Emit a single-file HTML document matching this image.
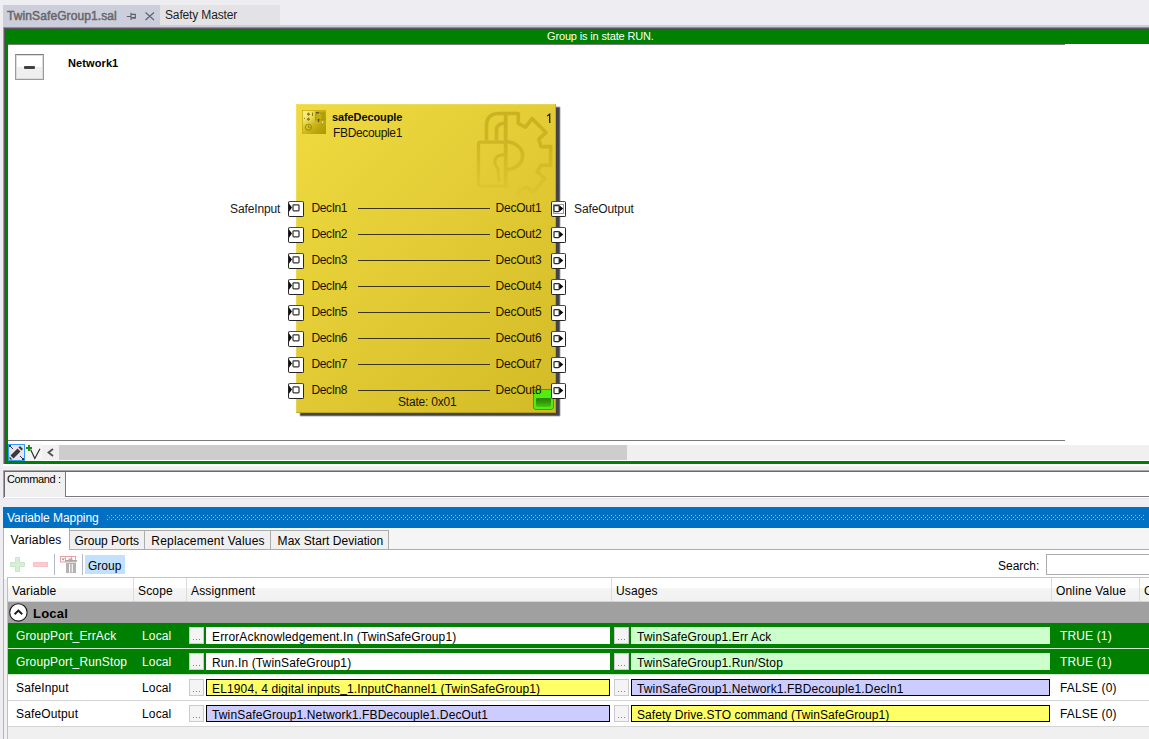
<!DOCTYPE html>
<html>
<head>
<meta charset="utf-8">
<title>TwinSafeGroup1.sal</title>
<style>
html,body{margin:0;padding:0;}
body{width:1149px;height:739px;background:#eeeef2;position:relative;overflow:hidden;font-family:"Liberation Sans",sans-serif;font-size:12px;color:#000;}
.a{position:absolute;}
.t{position:absolute;white-space:nowrap;line-height:14px;}
/* document tabs */
#tab1{left:3px;top:5px;width:157px;height:22px;background:#cccedb;}
#tab2{left:160px;top:5px;width:120px;height:20px;background:#e3e3e6;}
#tabline{left:3px;top:25px;width:1146px;height:2px;background:#cccedb;}
/* editor frame */
#frameTop{left:3px;top:27px;width:1146px;height:1px;background:#8f8f93;}
#frameTop2{left:4px;top:28px;width:1145px;height:1px;background:#5e5462;}
#frameLeft{left:3px;top:27px;width:1px;height:437px;background:#9c9ca3;}
#frameLeft2{left:4px;top:28px;width:1px;height:436px;background:#5e5462;}
#green{left:5px;top:29px;width:1144px;height:435px;background:#008000;}
#canvas{left:8px;top:44px;width:1141px;height:417px;background:#fff;}
#canvasTopLine{left:8px;top:44px;width:1057px;height:1px;background:#7d7d7d;}
#canvasBotLine{left:8px;top:440px;width:1057px;height:1px;background:#7a7a7a;}
/* function block */
#fb{left:296px;top:104px;width:260px;height:309px;background:linear-gradient(135deg,#efdb40 0%,#e3cc35 45%,#d3bb27 100%);box-shadow:4px 3px 1.200px 0 #444448, inset 1px 1px 0 rgba(255,255,255,0.16), inset -1px -1px 0 rgba(70,60,0,0.22);}
.pin{position:absolute;width:14px;height:14px;border:1px solid #262626;border-top-color:#4a4a4a;border-radius:2px;background:#fff;}
.pl{position:absolute;height:1px;left:358px;width:132px;background:#3b3508;}
.fbt{color:#191400;font-size:12px;}
#led{left:533px;top:389px;width:19px;height:19px;border:1px solid #3c9e0b;border-radius:3px;background:#54ec10;}
#collapse{left:15px;top:54px;width:27px;height:24px;border:1px solid #9a9a9a;border-top-color:#7e7e7e;background:#fff;box-shadow:inset 0 0 0 1px #dcdcdc;}
.vt{top:530px;height:19px;background:#f0f0f0;border:1px solid #acacac;border-bottom:none;box-sizing:border-box;}
.bt{width:15px;height:17px;box-sizing:border-box;border:1px solid #cdc8d2;background:#f4f4f4;overflow:hidden;}
.bt span{position:absolute;left:3px;top:11px;width:1px;height:1px;background:#85808c;box-shadow:3px 0 0 #85808c,6px 0 0 #85808c;font-size:0;color:transparent;}
.fld{height:17px;box-sizing:border-box;white-space:nowrap;overflow:visible;font-size:12px;line-height:17px;padding-left:6px;padding-top:2px;color:#000;letter-spacing:0.14px;}
.fld.b{padding-left:5px;padding-top:1px;}
</style>
</head>
<body>
<!-- document tab strip -->
<div class="a" id="tab1"></div>
<div class="a" id="tab2"></div>
<div class="a" id="tabline"></div>
<div class="t" style="left:7px;top:9px;color:#68686c;font-size:12px;letter-spacing:0.1px;-webkit-text-stroke:0.5px #68686c;">TwinSafeGroup1.sal</div>
<svg class="a" style="left:124px;top:9px;" width="34" height="14" viewBox="0 0 34 14">
  <path d="M2.800 7.500 H6.500 M7 3.800 V11 M7.500 5.400 H11.300 V9" stroke="#5e5e64" stroke-width="1.100" fill="none"/><rect x="7.400" y="8" width="4.500" height="1.700" fill="#5e5e64"/>
  <path d="M21.500 3.500 L30 11 M30 3.500 L21.500 11" stroke="#646468" stroke-width="1.2" fill="none"/>
</svg>
<div class="t" style="left:165px;top:8px;color:#1e1e1e;font-size:12px;letter-spacing:-0.15px;">Safety Master</div>

<!-- editor frame -->
<div class="a" id="frameTop"></div>
<div class="a" id="frameLeft"></div>
<div class="a" id="green"></div>
<div class="a" id="frameTop2"></div>
<div class="a" id="frameLeft2"></div>
<div class="a" id="canvas"></div>
<div class="a" id="canvasTopLine"></div>
<div class="a" id="canvasBotLine"></div>
<div class="t" style="left:547px;top:29px;color:#fff;font-size:11px;letter-spacing:-0.15px;">Group is in state RUN.</div>

<!-- function block -->
<div class="a" id="fb"></div>
<svg class="a" style="left:465px;top:105px;" width="95" height="95" viewBox="465 105 95 95">
  <defs>
    <linearGradient id="wf" x1="0" y1="0" x2="0" y2="1"><stop offset="0" stop-color="#fff" stop-opacity="1"/><stop offset="0.4" stop-color="#fff" stop-opacity="0.8"/><stop offset="0.85" stop-color="#fff" stop-opacity="0.2"/><stop offset="1" stop-color="#fff" stop-opacity="0.05"/></linearGradient>
    <mask id="wmk" maskUnits="userSpaceOnUse" x="465" y="105" width="95" height="95"><rect x="465" y="105" width="95" height="95" fill="url(#wf)"/></mask>
    <filter id="wb" x="-5%" y="-5%" width="110%" height="110%"><feGaussianBlur stdDeviation="0.7"/></filter>
  </defs>
  <g mask="url(#wmk)"><g filter="url(#wb)" opacity="0.55" fill="none" stroke="#b39a10" stroke-width="3.600" stroke-linejoin="round" stroke-linecap="butt">
    <path d="M486.500 140.500 V126 Q486.500 113.500 499 113.500 H518.300 V123.500 L525.500 127.200 L532 118.600 L546 132.600 L538.800 139.200 L541 146.600 H550.600 V165.400 H541 L537.200 172 L544.800 178.500 L533.200 192.400 L526.600 187.200 L518.300 190.600 V197"/>
    <path d="M496.500 140.500 V130.500 Q496.500 123.200 505.500 123"/>
    <path d="M505.700 112 V188" stroke-width="3.800"/>
    <path d="M505.500 142.200 H480.500 Q478.500 142.200 478.500 144.200 V184 Q478.500 186 480.500 186 H505.500" stroke-width="3.200"/>
    <path d="M505.500 141.800 A17.200 13.900 0 0 1 505.500 169.600"/>
    <path d="M505.500 154.500 Q494.800 154.800 494.800 161.500 Q494.800 166 498 168 L498.800 182" stroke-width="3"/>
  </g></g>
</svg>
<svg class="a" style="left:302px;top:110px;" width="24" height="24" viewBox="0 0 24 24">
  <defs>
    <linearGradient id="ig" x1="0" y1="0" x2="1" y2="1">
      <stop offset="0" stop-color="#f3e568"/><stop offset="0.35" stop-color="#dfcb33"/><stop offset="0.7" stop-color="#bea80f"/><stop offset="1" stop-color="#ac9800"/>
    </linearGradient>
    <radialGradient id="ih" cx="0.15" cy="0.2" r="0.5"><stop offset="0" stop-color="#fff7a0" stop-opacity="0.7"/><stop offset="1" stop-color="#fff7a0" stop-opacity="0"/></radialGradient>
  </defs>
  <rect x="0" y="0" width="24" height="24" fill="url(#ig)"/>
  <rect x="0" y="0" width="24" height="24" fill="url(#ih)"/>
  <rect x="0" y="0" width="24" height="1" fill="#c4ae18" opacity="0.8"/><rect x="0" y="0" width="1" height="24" fill="#c4ae18" opacity="0.8"/>
  <rect x="13" y="1.500" width="10.500" height="9" fill="#a99500" opacity="0.75"/>
  <g fill="#7d6c00" opacity="0.85">
    <path d="M6.400 2.300 L8.200 4.200 L6.400 6.100 L4.600 4.200 Z"/>
    <path d="M6.400 7.300 L8.200 9.200 L6.400 11.100 L4.600 9.200 Z"/>
    <rect x="2" y="7.800" width="1" height="1"/>
    <rect x="10" y="2.600" width="1" height="3.400"/>
    <rect x="14" y="2" width="3" height="1.500" fill="#5e5200"/>
    <rect x="15.800" y="9" width="1.400" height="3" fill="#4e4400"/>
  </g>
  <path d="M14.500 7 L17 3.800 L19.500 7 M15 9 L17 6.500 L19 9" stroke="#d8c838" stroke-width="1" fill="none" opacity="0.8"/>
  <rect x="20" y="11.600" width="1.200" height="1.200" fill="#fffbe0"/>
  <circle cx="6.400" cy="17.200" r="3.100" fill="none" stroke="#8a7800" stroke-width="0.9" opacity="0.8"/>
  <path d="M6.400 15 V17.400 H8.400" stroke="#8a7800" stroke-width="0.8" fill="none" opacity="0.8"/>
</svg>
<div class="t" style="left:332px;top:110px;font-weight:bold;font-size:11px;color:#0c0c0c;letter-spacing:-0.1px;">safeDecouple</div>
<div class="t fbt" style="left:333px;top:126px;letter-spacing:-0.34px;">FBDecouple1</div>
<svg class="a" style="left:545px;top:112px;" width="8" height="13" viewBox="545 112 8 13"><path d="M547.200 116 L549.700 114.300 V123" stroke="#1c1600" stroke-width="1.250" fill="none"/></svg>
<div class="t fbt" style="left:398px;top:395px;letter-spacing:-0.2px;">State: 0x01</div>
<div class="a" id="led"><div class="a" style="left:2px;top:8px;width:15px;height:9px;border-radius:1px 1px 2px 2px;background:linear-gradient(180deg,#2a8507 0%,#2f9208 35%,#44c80d 100%);"></div></div>
<div class="pin" style="left:288px;top:201px;"><svg class="a" style="left:0;top:0" width="14" height="14" viewBox="0 0 14 14"><path d="M0 1.500 L3 5.600 L0 9.700 Z" fill="#0a0a0a"/><rect x="4" y="2.900" width="6" height="6" rx="0.800" fill="#fff" stroke="#353535" stroke-width="1.250"/></svg></div>
<div class="pin" style="left:551px;top:201px;width:13px;"><svg class="a" style="left:0;top:0" width="14" height="14" viewBox="0 0 14 14"><rect x="1.500" y="2.500" width="10" height="9" fill="none" stroke="#333" stroke-width="1" stroke-dasharray="1 1"/><rect x="2" y="3.500" width="5.200" height="6" rx="0.800" fill="#fff" stroke="#2c2c2c" stroke-width="1.250"/><path d="M7.400 3.200 L11.300 6.500 L7.400 9.800 Z" fill="#0a0a0a"/></svg></div>
<div class="t fbt" style="left:311.600px;top:201px;letter-spacing:-0.42px;">DecIn1</div>
<div class="t fbt" style="left:495.500px;top:201px;letter-spacing:-0.2px;">DecOut1</div>
<div class="pl" style="top:208px;"></div>
<div class="pin" style="left:288px;top:227px;"><svg class="a" style="left:0;top:0" width="14" height="14" viewBox="0 0 14 14"><path d="M0 1.500 L3 5.600 L0 9.700 Z" fill="#0a0a0a"/><rect x="4" y="2.900" width="6" height="6" rx="0.800" fill="#fff" stroke="#353535" stroke-width="1.250"/></svg></div>
<div class="pin" style="left:551px;top:227px;width:13px;"><svg class="a" style="left:0;top:0" width="14" height="14" viewBox="0 0 14 14"><rect x="2" y="3.500" width="5.200" height="6" rx="0.800" fill="#fff" stroke="#2c2c2c" stroke-width="1.250"/><path d="M7.400 3.200 L11.300 6.500 L7.400 9.800 Z" fill="#0a0a0a"/></svg></div>
<div class="t fbt" style="left:311.600px;top:227px;letter-spacing:-0.42px;">DecIn2</div>
<div class="t fbt" style="left:495.500px;top:227px;letter-spacing:-0.2px;">DecOut2</div>
<div class="pl" style="top:234px;"></div>
<div class="pin" style="left:288px;top:253px;"><svg class="a" style="left:0;top:0" width="14" height="14" viewBox="0 0 14 14"><path d="M0 1.500 L3 5.600 L0 9.700 Z" fill="#0a0a0a"/><rect x="4" y="2.900" width="6" height="6" rx="0.800" fill="#fff" stroke="#353535" stroke-width="1.250"/></svg></div>
<div class="pin" style="left:551px;top:253px;width:13px;"><svg class="a" style="left:0;top:0" width="14" height="14" viewBox="0 0 14 14"><rect x="2" y="3.500" width="5.200" height="6" rx="0.800" fill="#fff" stroke="#2c2c2c" stroke-width="1.250"/><path d="M7.400 3.200 L11.300 6.500 L7.400 9.800 Z" fill="#0a0a0a"/></svg></div>
<div class="t fbt" style="left:311.600px;top:253px;letter-spacing:-0.42px;">DecIn3</div>
<div class="t fbt" style="left:495.500px;top:253px;letter-spacing:-0.2px;">DecOut3</div>
<div class="pl" style="top:260px;"></div>
<div class="pin" style="left:288px;top:279px;"><svg class="a" style="left:0;top:0" width="14" height="14" viewBox="0 0 14 14"><path d="M0 1.500 L3 5.600 L0 9.700 Z" fill="#0a0a0a"/><rect x="4" y="2.900" width="6" height="6" rx="0.800" fill="#fff" stroke="#353535" stroke-width="1.250"/></svg></div>
<div class="pin" style="left:551px;top:279px;width:13px;"><svg class="a" style="left:0;top:0" width="14" height="14" viewBox="0 0 14 14"><rect x="2" y="3.500" width="5.200" height="6" rx="0.800" fill="#fff" stroke="#2c2c2c" stroke-width="1.250"/><path d="M7.400 3.200 L11.300 6.500 L7.400 9.800 Z" fill="#0a0a0a"/></svg></div>
<div class="t fbt" style="left:311.600px;top:279px;letter-spacing:-0.42px;">DecIn4</div>
<div class="t fbt" style="left:495.500px;top:279px;letter-spacing:-0.2px;">DecOut4</div>
<div class="pl" style="top:286px;"></div>
<div class="pin" style="left:288px;top:305px;"><svg class="a" style="left:0;top:0" width="14" height="14" viewBox="0 0 14 14"><path d="M0 1.500 L3 5.600 L0 9.700 Z" fill="#0a0a0a"/><rect x="4" y="2.900" width="6" height="6" rx="0.800" fill="#fff" stroke="#353535" stroke-width="1.250"/></svg></div>
<div class="pin" style="left:551px;top:305px;width:13px;"><svg class="a" style="left:0;top:0" width="14" height="14" viewBox="0 0 14 14"><rect x="2" y="3.500" width="5.200" height="6" rx="0.800" fill="#fff" stroke="#2c2c2c" stroke-width="1.250"/><path d="M7.400 3.200 L11.300 6.500 L7.400 9.800 Z" fill="#0a0a0a"/></svg></div>
<div class="t fbt" style="left:311.600px;top:305px;letter-spacing:-0.42px;">DecIn5</div>
<div class="t fbt" style="left:495.500px;top:305px;letter-spacing:-0.2px;">DecOut5</div>
<div class="pl" style="top:312px;"></div>
<div class="pin" style="left:288px;top:331px;"><svg class="a" style="left:0;top:0" width="14" height="14" viewBox="0 0 14 14"><path d="M0 1.500 L3 5.600 L0 9.700 Z" fill="#0a0a0a"/><rect x="4" y="2.900" width="6" height="6" rx="0.800" fill="#fff" stroke="#353535" stroke-width="1.250"/></svg></div>
<div class="pin" style="left:551px;top:331px;width:13px;"><svg class="a" style="left:0;top:0" width="14" height="14" viewBox="0 0 14 14"><rect x="2" y="3.500" width="5.200" height="6" rx="0.800" fill="#fff" stroke="#2c2c2c" stroke-width="1.250"/><path d="M7.400 3.200 L11.300 6.500 L7.400 9.800 Z" fill="#0a0a0a"/></svg></div>
<div class="t fbt" style="left:311.600px;top:331px;letter-spacing:-0.42px;">DecIn6</div>
<div class="t fbt" style="left:495.500px;top:331px;letter-spacing:-0.2px;">DecOut6</div>
<div class="pl" style="top:338px;"></div>
<div class="pin" style="left:288px;top:357px;"><svg class="a" style="left:0;top:0" width="14" height="14" viewBox="0 0 14 14"><path d="M0 1.500 L3 5.600 L0 9.700 Z" fill="#0a0a0a"/><rect x="4" y="2.900" width="6" height="6" rx="0.800" fill="#fff" stroke="#353535" stroke-width="1.250"/></svg></div>
<div class="pin" style="left:551px;top:357px;width:13px;"><svg class="a" style="left:0;top:0" width="14" height="14" viewBox="0 0 14 14"><rect x="2" y="3.500" width="5.200" height="6" rx="0.800" fill="#fff" stroke="#2c2c2c" stroke-width="1.250"/><path d="M7.400 3.200 L11.300 6.500 L7.400 9.800 Z" fill="#0a0a0a"/></svg></div>
<div class="t fbt" style="left:311.600px;top:357px;letter-spacing:-0.42px;">DecIn7</div>
<div class="t fbt" style="left:495.500px;top:357px;letter-spacing:-0.2px;">DecOut7</div>
<div class="pl" style="top:364px;"></div>
<div class="pin" style="left:288px;top:383px;"><svg class="a" style="left:0;top:0" width="14" height="14" viewBox="0 0 14 14"><path d="M0 1.500 L3 5.600 L0 9.700 Z" fill="#0a0a0a"/><rect x="4" y="2.900" width="6" height="6" rx="0.800" fill="#fff" stroke="#353535" stroke-width="1.250"/></svg></div>
<div class="pin" style="left:551px;top:383px;width:13px;"><svg class="a" style="left:0;top:0" width="14" height="14" viewBox="0 0 14 14"><rect x="2" y="3.500" width="5.200" height="6" rx="0.800" fill="#fff" stroke="#2c2c2c" stroke-width="1.250"/><path d="M7.400 3.200 L11.300 6.500 L7.400 9.800 Z" fill="#0a0a0a"/></svg></div>
<div class="t fbt" style="left:311.600px;top:383px;letter-spacing:-0.42px;">DecIn8</div>
<div class="t fbt" style="left:495.500px;top:383px;letter-spacing:-0.2px;">DecOut8</div>
<div class="pl" style="top:390px;"></div>
<div class="t" style="left:230px;top:202px;color:#1a1a1a;letter-spacing:-0.12px;">SafeInput</div>
<div class="t" style="left:574px;top:202px;color:#1a1a1a;letter-spacing:-0.1px;">SafeOutput</div>


<!-- network header -->
<div class="a" id="collapse"><div class="a" style="left:1px;top:12px;width:25px;height:11px;background:#efefef;"></div><div class="a" style="left:8px;top:11px;width:11px;height:3px;background:#404040;border-radius:1px;"></div></div>
<div class="t" style="left:68px;top:56px;font-weight:bold;font-size:11px;color:#000;letter-spacing:0.1px;">Network1</div>

<!-- canvas bottom tool strip -->
<div class="a" style="left:8px;top:444px;width:17px;height:17px;background:#e6e6ec;border:1px solid #3399ff;box-sizing:border-box;"></div>
<svg class="a" style="left:8px;top:444px;" width="17" height="17" viewBox="0 0 17 17">
  <path d="M2 2 L5 5 M12 12 L15 15" stroke="#333" stroke-width="1" fill="none"/>
  <path d="M2.5 11.5 L9.5 4.5 L12.5 7.5 L5.5 14.5 Z" fill="#3a3a3a"/>
  <path d="M10.5 3.5 L12 2 L15 5 L13.5 6.5 Z" fill="#3a3a3a"/>
  <path d="M1.5 12.5 L4.5 15.5 L1.5 15.5 Z" fill="#3a3a3a"/>
  <rect x="1" y="1" width="2" height="2" fill="#333"/><rect x="14" y="14" width="2" height="2" fill="#333"/>
</svg>
<div class="a" style="left:25px;top:444px;width:17px;height:17px;background:#f5f5f5;"></div>
<svg class="a" style="left:25px;top:444px;" width="17" height="17" viewBox="0 0 17 17">
  <path d="M1 4 H7 M4 1 V7" stroke="#1e8a1e" stroke-width="1.900" fill="none"/>
  <path d="M5.600 5.500 L9.800 14.500 L15 4.800" stroke="#2a2a2a" stroke-width="1.150" fill="none"/>
</svg>
<div class="a" style="left:42px;top:445px;width:1107px;height:15px;background:#f0f0f0;"></div>
<svg class="a" style="left:42px;top:444px;" width="17" height="17" viewBox="0 0 17 17">
  <path d="M11 5 L6.5 8.5 L11 12" stroke="#505050" stroke-width="1.8" fill="none"/>
</svg>
<div class="a" style="left:59px;top:445px;width:568px;height:15px;background:#cdcdcd;"></div>

<!-- splitter + command -->
<div class="a" style="left:3px;top:464px;width:1146px;height:2px;background:#ffffff;"></div>
<div class="a" style="left:3px;top:466px;width:1146px;height:4px;background:#f0f0f0;"></div>
<div class="a" style="left:3px;top:470px;width:1146px;height:1px;background:#a8a8a8;"></div>
<div class="a" style="left:4px;top:471px;width:1145px;height:1px;background:#6a6a6a;"></div>
<div class="a" style="left:3px;top:471px;width:1px;height:27px;background:#a0a0a0;"></div>
<div class="a" style="left:4px;top:472px;width:1px;height:25px;background:#6a6a6a;"></div>
<div class="a" style="left:5px;top:472px;width:1144px;height:25px;background:#f0f0f0;"></div>
<div class="a" style="left:4px;top:497px;width:1145px;height:1px;background:#fff;"></div>
<div class="a" style="left:3px;top:498px;width:1146px;height:1px;background:#e4e4ee;"></div>
<div class="a" style="left:65px;top:472px;width:1084px;height:25px;background:#fff;border-left:1px solid #7a7a7a;border-bottom:1px solid #7a7a7a;box-sizing:border-box;"></div>
<div class="t" style="left:7px;top:472px;font-size:11px;color:#000;letter-spacing:-0.36px;">Command :</div>

<!-- variable mapping -->
<div class="a" style="left:3px;top:507px;width:1146px;height:21px;background:#0070c4;"></div>
<svg class="a" style="left:107px;top:515px;" width="1037" height="5" viewBox="0 0 1037 5" shape-rendering="crispEdges"><defs><pattern id="gp" width="4" height="4" patternUnits="userSpaceOnUse"><rect x="0" y="0" width="1" height="1" fill="#8cc0ea"/><rect x="2" y="2" width="1" height="1" fill="#8cc0ea"/></pattern></defs><rect width="1037" height="5" fill="url(#gp)"/></svg>
<div class="t" style="left:7px;top:511px;color:#fff;font-size:12px;letter-spacing:-0.05px;">Variable Mapping</div>
<div class="a" style="left:3px;top:528px;width:1146px;height:211px;background:#f0f0f0;"></div>
<div class="a" style="left:3px;top:528px;width:1px;height:211px;background:#b4b4b8;"></div>
<div class="a" style="left:4px;top:528px;width:1145px;height:22px;background:#f5f5f5;"></div>
<div class="a" style="left:4px;top:549px;width:1145px;height:1px;background:#acacac;"></div>
<div class="a" style="left:4px;top:550px;width:1145px;height:29px;background:#fff;"></div>
<!-- tabs -->
<div class="a" style="left:4px;top:528px;width:66px;height:22px;background:#fff;border-right:1px solid #acacac;box-sizing:border-box;"></div>
<div class="t" style="left:10.600px;top:533px;font-size:12px;letter-spacing:0.2px;">Variables</div>
<div class="a vt" style="left:69px;width:76px;"></div><div class="t" style="left:74.400px;top:534px;">Group Ports</div>
<div class="a vt" style="left:144px;width:127px;"></div><div class="t" style="left:151.300px;top:534px;letter-spacing:0.2px;">Replacement Values</div>
<div class="a vt" style="left:270px;width:119px;"></div><div class="t" style="left:277.600px;top:534px;letter-spacing:0.05px;">Max Start Deviation</div>
<!-- toolbar -->
<svg class="a" style="left:9px;top:555px;" width="70" height="20" viewBox="0 0 70 20">
  <path d="M6.5 2.5 h4 v5 h5 v4 h-5 v5 h-4 v-5 h-5 v-4 h5 z" fill="#d6efd6" stroke="#c8e6c8" stroke-width="1"/>
  <rect x="24.5" y="7.500" width="14" height="4" fill="#f8ccd0" stroke="#f5c2c8" stroke-width="1"/>
</svg>
<div class="a" style="left:54px;top:554px;width:1px;height:21px;background:#b4b8c4;"></div>
<svg class="a" style="left:59px;top:555px;" width="20" height="20" viewBox="0 0 20 20">
  <rect x="1.500" y="1.500" width="15" height="5.500" fill="#fff" stroke="#e8a0a6" stroke-width="1"/>
  <path d="M6.500 1.500 v5.500 M12.500 1.500 v5.500" stroke="#e8a0a6" stroke-width="1"/>
  <path d="M3 3 l1.200 2.200 l1.200 -2.200" stroke="#808080" stroke-width="0.800" fill="none"/>
  <rect x="9.500" y="3.500" width="4" height="1.500" fill="#b0b0b0"/>
  <rect x="6" y="5" width="12" height="1.600" fill="#a6a6a6"/>
  <rect x="7" y="8" width="10" height="10" fill="#b2b2b2"/>
  <rect x="10" y="9" width="1.100" height="8.500" fill="#fff"/>
  <rect x="12.700" y="9" width="1.100" height="8.500" fill="#fff"/>
</svg>
<div class="a" style="left:82px;top:554px;width:1px;height:21px;background:#b4b8c4;"></div>
<div class="a" style="left:85px;top:555px;width:39.500px;height:19px;background:#c2e0ff;"></div>
<div class="t" style="left:88px;top:559px;">Group</div>
<div class="t" style="left:998px;top:559px;">Search:</div>
<div class="a" style="left:1046px;top:554px;width:110px;height:21px;background:#fff;border:1px solid #abadb3;box-sizing:border-box;"></div>

<!-- table -->
<div class="a" style="left:7px;top:577px;width:1142px;height:162px;background:#f0f0f0;"></div>
<div class="a" style="left:7px;top:577px;width:1142px;height:1px;background:#c4c4c4;"></div>
<div class="a" style="left:7px;top:577px;width:1px;height:162px;background:#c0c0c0;"></div>
<div class="a" style="left:8px;top:578px;width:1141px;height:23px;background:linear-gradient(180deg,#ffffff 0%,#ffffff 42%,#f4f4f4 47%,#f1f1f1 100%);"></div>
<div class="a" style="left:8px;top:601px;width:1141px;height:1px;background:#d5d5d5;"></div>
<div class="a" style="left:133px;top:578px;width:1px;height:23px;background:#dcdcdc;"></div>
<div class="a" style="left:186px;top:578px;width:1px;height:23px;background:#dcdcdc;"></div>
<div class="a" style="left:611px;top:578px;width:1px;height:23px;background:#dcdcdc;"></div>
<div class="a" style="left:1051px;top:578px;width:1px;height:23px;background:#dcdcdc;"></div>
<div class="a" style="left:1139px;top:578px;width:1px;height:23px;background:#dcdcdc;"></div>
<div class="t" style="left:12px;top:584px;letter-spacing:0.16px;">Variable</div>
<div class="t" style="left:138px;top:584px;letter-spacing:0.16px;">Scope</div>
<div class="t" style="left:191px;top:584px;letter-spacing:0.16px;">Assignment</div>
<div class="t" style="left:616px;top:584px;letter-spacing:0.16px;">Usages</div>
<div class="t" style="left:1056px;top:584px;letter-spacing:0.18px;">Online Value</div>
<div class="t" style="left:1144px;top:584px;letter-spacing:0.16px;">C</div>
<div class="a" style="left:8px;top:602px;width:1141px;height:21px;background:#a0a0a0;"></div>
<svg class="a" style="left:9px;top:603px;" width="20" height="20" viewBox="0 0 20 20"><circle cx="9.400" cy="9.400" r="8.700" fill="#fff" stroke="#1c1c1c" stroke-width="1.100"/><path d="M5.600 11.300 L9.400 7.600 L13.200 11.300" stroke="#1a1a1a" stroke-width="1.900" fill="none"/></svg>
<div class="t" style="left:33px;top:607px;font-weight:bold;font-size:13px;color:#000;letter-spacing:0.2px;">Local</div>
<div class="a" style="left:8px;top:623px;width:1141px;height:25px;background:#008000;"></div>
<div class="a" style="left:8px;top:648px;width:1141px;height:1px;background:#cfe6cf;"></div>
<div class="t" style="left:16px;top:629px;color:#fff;letter-spacing:0.14px;">GroupPort_ErrAck</div>
<div class="t" style="left:142px;top:629px;color:#fff;letter-spacing:0.14px;">Local</div>
<div class="a bt" style="left:189px;top:627px;"><span>...</span></div>
<div class="a bt" style="left:614px;top:627px;"><span>...</span></div>
<div class="a fld" style="left:206px;top:627px;width:404px;background:#fff;">ErrorAcknowledgement.In (TwinSafeGroup1)</div>
<div class="a fld" style="left:631px;top:627px;width:419px;background:#ccffcc;">TwinSafeGroup1.Err Ack</div>
<div class="t" style="left:1060px;top:629px;color:#fff;letter-spacing:0.14px;">TRUE (1)</div>
<div class="a" style="left:8px;top:649px;width:1141px;height:25px;background:#008000;"></div>
<div class="a" style="left:8px;top:674px;width:1141px;height:1px;background:#cfe6cf;"></div>
<div class="t" style="left:16px;top:655px;color:#fff;letter-spacing:0.14px;">GroupPort_RunStop</div>
<div class="t" style="left:142px;top:655px;color:#fff;letter-spacing:0.14px;">Local</div>
<div class="a bt" style="left:189px;top:653px;"><span>...</span></div>
<div class="a bt" style="left:614px;top:653px;"><span>...</span></div>
<div class="a fld" style="left:206px;top:653px;width:404px;background:#fff;">Run.In (TwinSafeGroup1)</div>
<div class="a fld" style="left:631px;top:653px;width:419px;background:#ccffcc;">TwinSafeGroup1.Run/Stop</div>
<div class="t" style="left:1060px;top:655px;color:#fff;letter-spacing:0.14px;">TRUE (1)</div>
<div class="a" style="left:8px;top:675px;width:1141px;height:25px;background:#fff;"></div>
<div class="a" style="left:8px;top:700px;width:1141px;height:1px;background:#d4d4d4;"></div>
<div class="t" style="left:16px;top:681px;color:#000;letter-spacing:0.14px;">SafeInput</div>
<div class="t" style="left:142px;top:681px;color:#000;letter-spacing:0.14px;">Local</div>
<div class="a bt" style="left:189px;top:679px;"><span>...</span></div>
<div class="a bt" style="left:614px;top:679px;"><span>...</span></div>
<div class="a fld b" style="left:206px;top:679px;width:404px;background:#ffff66;border:1px solid #000;">EL1904, 4 digital inputs<span style="position:relative;top:-1.500px;">_</span>1.InputChannel1 (TwinSafeGroup1)</div>
<div class="a fld b" style="left:631px;top:679px;width:419px;background:#ccccff;border:1px solid #000;">TwinSafeGroup1.Network1.FBDecouple1.DecIn1</div>
<div class="t" style="left:1060px;top:681px;color:#000;letter-spacing:0.14px;">FALSE (0)</div>
<div class="a" style="left:8px;top:701px;width:1141px;height:25px;background:#fff;"></div>
<div class="a" style="left:8px;top:726px;width:1141px;height:1px;background:#d4d4d4;"></div>
<div class="t" style="left:16px;top:707px;color:#000;letter-spacing:0.14px;">SafeOutput</div>
<div class="t" style="left:142px;top:707px;color:#000;letter-spacing:0.14px;">Local</div>
<div class="a bt" style="left:189px;top:705px;"><span>...</span></div>
<div class="a bt" style="left:614px;top:705px;"><span>...</span></div>
<div class="a fld b" style="left:206px;top:705px;width:404px;background:#ccccff;border:1px solid #000;">TwinSafeGroup1.Network1.FBDecouple1.DecOut1</div>
<div class="a fld b" style="left:631px;top:705px;width:419px;background:#ffff66;border:1px solid #000;letter-spacing:0.06px;">Safety Drive.STO command (TwinSafeGroup1)</div>
<div class="t" style="left:1060px;top:707px;color:#000;letter-spacing:0.14px;">FALSE (0)</div>
</body>
</html>
